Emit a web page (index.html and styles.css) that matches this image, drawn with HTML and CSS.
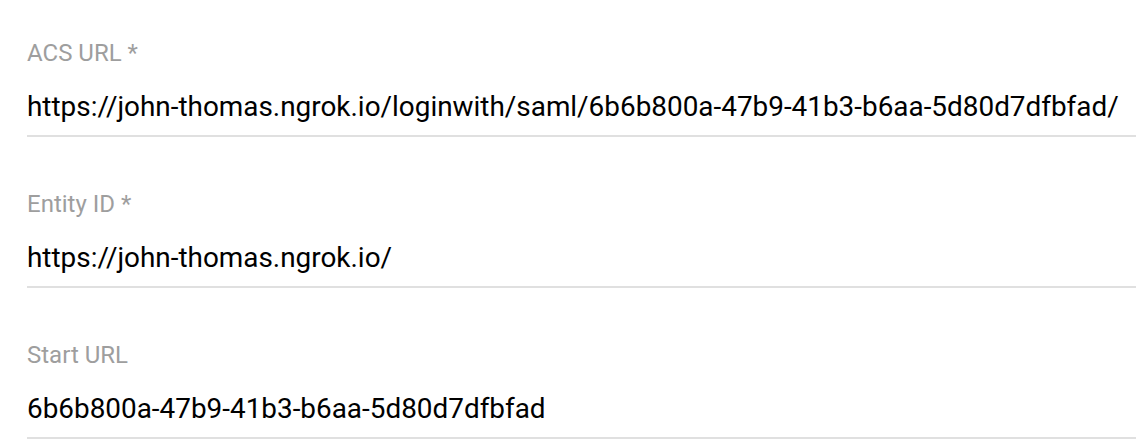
FILE: index.html
```html
<!DOCTYPE html>
<html lang="en">
<head>
<meta charset="utf-8">
<title>SAML settings</title>
<link rel="stylesheet" href="styles.css">
</head>
<body>
  <form class="saml-form">
    <div class="field">
      <label class="field-label">ACS URL *</label>
      <div class="field-value">https://john-thomas.ngrok.io/loginwith/saml/6b6b800a-47b9-41b3-b6aa-5d80d7dfbfad/</div>
    </div>
    <div class="field">
      <label class="field-label">Entity ID *</label>
      <div class="field-value">https://john-thomas.ngrok.io/</div>
    </div>
    <div class="field">
      <label class="field-label">Start URL</label>
      <div class="field-value">6b6b800a-47b9-41b3-b6aa-5d80d7dfbfad</div>
    </div>
  </form>
</body>
</html>
```

FILE: styles.css
```css
html, body {
  margin: 0;
  padding: 0;
  background: #ffffff;
}

body {
  font-family: Roboto, "Liberation Sans", Arial, sans-serif;
  overflow: hidden;
}

.saml-form {
  display: flex;
  flex-direction: column;
  gap: 53px;
  padding: 39px 0 0 27px;
}

.field {
  display: flex;
  flex-direction: column;
  gap: 23px;
  padding-bottom: 11px;
  border-bottom: 2px solid #e0e0e0;
}

.field-label {
  font-size: 24px;
  line-height: 28px;
  color: #9e9e9e;
}

.field-value {
  font-size: 27.9px;
  line-height: 34px;
  color: #000000;
  white-space: nowrap;
}
```
